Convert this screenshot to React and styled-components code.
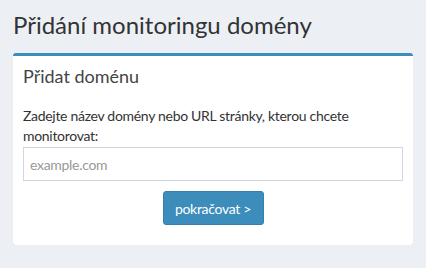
import React from "react";
import styled, { createGlobalStyle } from "styled-components";

const Global = createGlobalStyle`
  html, body { margin: 0; padding: 0; background: #ecf0f5; }
  body { font-family: "Lato", "Noto Sans", sans-serif; color: #333; }
  * { box-sizing: border-box; }
`;

const Page = styled.div`
  padding: 12px 13px 0 13px;
  width: 426px;
`;

const Title = styled.h1`
  margin: 0 0 15px 0;
  font-size: 24px;
  font-weight: 400;
  line-height: 26px;
  color: #333;
`;

const Box = styled.div`
  background: #fff;
  border-top: 3px solid #3c8dbc;
  border-radius: 3px;
  box-shadow: 0 1px 1px rgba(0, 0, 0, 0.1);
  width: 400px;
`;

const BoxHeader = styled.div`
  padding: 10px;
  font-size: 18px;
  line-height: 20px;
  color: #444;
`;

const BoxBody = styled.div`
  padding: 10px 10px 20px;
  display: flex;
  flex-direction: column;
`;

const Label = styled.label`
  font-size: 14px;
  line-height: 20px;
  letter-spacing: -0.3px;
  color: #333;
  margin: 0 0 1px;
`;

const Input = styled.input`
  height: 34px;
  border: 1px solid #d2d6de;
  padding: 6px 6px;
  font-size: 14px;
  letter-spacing: -0.3px;
  font-family: inherit;
  color: #555;
  outline: none;
  &::placeholder { color: #999; }
`;

const Actions = styled.div`
  display: flex;
  justify-content: center;
  margin-top: 10px;
`;

const Button = styled.button`
  height: 34px;
  width: 101px;
  padding: 0;
  background: #3c8dbc;
  border: 1px solid #367fa9;
  border-radius: 3px;
  color: #fff;
  font-size: 14px;
  letter-spacing: -0.3px;
  font-family: inherit;
`;

export default function App() {
  return (
    <>
      <Global />
      <Page>
        <Title>Přidání monitoringu domény</Title>
        <Box>
          <BoxHeader>Přidat doménu</BoxHeader>
          <BoxBody>
            <Label>Zadejte název domény nebo URL stránky, kterou chcete monitorovat:</Label>
            <Input placeholder="example.com" />
            <Actions>
              <Button>pokračovat &gt;</Button>
            </Actions>
          </BoxBody>
        </Box>
      </Page>
    </>
  );
}
